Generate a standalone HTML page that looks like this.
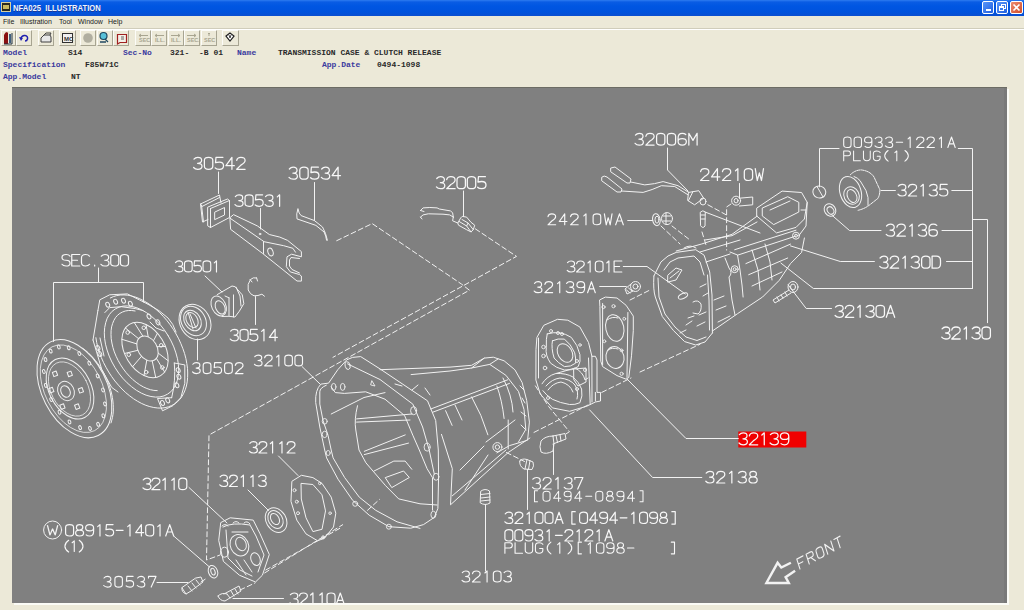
<!DOCTYPE html>
<html><head><meta charset="utf-8">
<style>
html,body{margin:0;padding:0;width:1024px;height:610px;overflow:hidden;background:#ECE9D8;position:relative;font-family:"Liberation Sans",sans-serif;}
.abs{position:absolute;}
#title{left:0;top:0;width:1024px;height:16px;background:linear-gradient(#2e7cf0 0,#0a5ce4 2px,#0056e2 6px,#0053dd 12px,#0b4fd0 16px);}
#title .t{left:13px;top:3px;color:#eef4ff;font-weight:bold;font-size:8.5px;line-height:10px;white-space:nowrap;transform:scaleX(0.9);transform-origin:0 0;text-shadow:0.5px 0.5px 0 #1a3a9a;letter-spacing:0px;}
.wb{top:1px;width:12px;height:13px;border:1px solid #fff;border-radius:2px;box-sizing:border-box;background:linear-gradient(135deg,#5a96f8,#1f5fe0);}
#menu{left:0;top:16px;width:1024px;height:12px;font-size:7px;color:#222;}
#menu span{position:absolute;top:2px;line-height:8px;}
.sep{left:0;top:28px;width:1024px;height:1px;background:#d0cdbb;border-bottom:1px solid #fff;}
.btn{top:30px;height:16px;box-sizing:border-box;border-right:1px solid #a7a491;border-bottom:1px solid #a7a491;border-left:1px solid #fcfcf8;border-top:1px solid #fcfcf8;}
.info{font-family:"Liberation Mono",monospace;font-size:8px;font-weight:bold;line-height:8px;white-space:pre;}
.lb{color:#3b3b9e;}
.vl{color:#2a2a2a;}
#gray{left:12px;top:87px;width:995px;height:516px;background:#808080;box-shadow:2px 2px 0 #fbfbf6;border-top:1px solid #6c6c64;box-sizing:border-box;}
svg.tb{position:absolute;left:0;top:0;}
svg.dr{position:absolute;left:0;top:0;}
</style></head><body>
<div id="title" class="abs">
  <div class="abs" style="left:1px;top:2px;width:10px;height:10px;background:#2a2a20;border:1px solid #d8d0a0;box-sizing:border-box;"><div class="abs" style="left:1px;top:2px;width:6px;height:4px;background:#c8b860"></div></div>
  <div class="abs t">NFA025&nbsp; ILLUSTRATION</div>
  <div class="abs wb" style="left:982px;"><div class="abs" style="left:3px;top:7px;width:5px;height:2px;background:#fff"></div></div>
  <div class="abs wb" style="left:996px;"><div class="abs" style="left:4px;top:2px;width:5px;height:5px;border:1px solid #fff;box-sizing:border-box"></div><div class="abs" style="left:2px;top:4px;width:5px;height:5px;border:1px solid #fff;border-top-width:2px;box-sizing:border-box;background:#3a7cf0"></div></div>
  <div class="abs wb" style="left:1010px;width:13px;background:linear-gradient(135deg,#ec8c72,#d24e28);"><svg class="tb" width="11" height="11"><path d="M2.5 2.5L8.5 8.5M8.5 2.5L2.5 8.5" stroke="#fff" stroke-width="1.6"/></svg></div>
</div>
<div id="menu" class="abs">
  <span style="left:3px">File</span><span style="left:20px">Illustration</span><span style="left:59px">Tool</span><span style="left:78px">Window</span><span style="left:108px">Help</span>
</div>
<div class="abs sep"></div>
<!-- toolbar -->
<div class="abs btn" style="left:1px;width:15px"></div>
<div class="abs btn" style="left:16px;width:16px"></div>
<div class="abs btn" style="left:38px;width:16px"></div>
<div class="abs btn" style="left:59px;width:17px"></div>
<div class="abs btn" style="left:80px;width:16px"></div>
<div class="abs btn" style="left:97px;width:16px"></div>
<div class="abs btn" style="left:113px;width:16px"></div>
<div class="abs btn" style="left:135px;width:16px"></div>
<div class="abs btn" style="left:151px;width:16px"></div>
<div class="abs btn" style="left:168px;width:16px"></div>
<div class="abs btn" style="left:184px;width:16px"></div>
<div class="abs btn" style="left:201px;width:16px"></div>
<div class="abs btn" style="left:222px;width:17px"></div>
<svg class="tb" width="260" height="50">
 <!-- door -->
 <path d="M4 44 L4 35 Q5 32 7 32 L8 33 L8 44 Z" fill="#8a1010"/>
 <rect x="9" y="34" width="2" height="9" fill="#406080"/>
 <path d="M12 33 L12 44 L4 44" stroke="#203040" fill="none" stroke-width="1"/>
 <!-- undo -->
 <path d="M20.5 39 Q22 35 25 35.5 Q28 36 27.5 39 Q27 41 25 41" stroke="#2020b0" fill="none" stroke-width="1.5"/>
 <path d="M19 37 L21 41 L23 38 Z" fill="#2020b0"/>
 <!-- printer -->
 <path d="M41 42 L41 38 L44 35 L50 35 L51 37 L51 42 Z" fill="#e8e8e8" stroke="#404040" stroke-width="1"/>
 <path d="M44 35 L46 33 L51 33 L50 35" fill="none" stroke="#404040"/>
 <!-- MC -->
 <rect x="62.5" y="33.5" width="10" height="9" fill="#f0f0f0" stroke="#303030"/>
 <text x="64" y="40.5" font-family="Liberation Sans" font-size="6" font-weight="bold" fill="#303030">MC</text>
 <!-- gray circle -->
 <circle cx="88" cy="38" r="4.8" fill="#b0aea0"/>
 <!-- search -->
 <circle cx="103.5" cy="36" r="3.5" fill="#58c0d8" stroke="#204860" stroke-width="1.2"/>
 <path d="M100 42 L106 42 M105 39 L108 42" stroke="#204860" stroke-width="1.3"/>
 <!-- red book -->
 <path d="M117.5 34.5 L126.5 34.5 L126.5 42.5 L120 42.5 L117.5 44 Z" fill="#f4f0e8" stroke="#a02020" stroke-width="1.2"/>
 <path d="M121 37 L124 37 M121 39 L124 39" stroke="#404040" stroke-width="0.8"/>
 <!-- disabled nav -->
 <g stroke="#a8a590" fill="none" stroke-width="1">
  <path d="M139 35.5 L148 35.5 M139 35.5 L141 34 M139 35.5 L141 37"/>
  <path d="M155 35.5 L164 35.5 M155 35.5 L157 34 M155 35.5 L157 37"/>
  <path d="M171 35.5 L180 35.5 M180 35.5 L178 34 M180 35.5 L178 37"/>
  <path d="M187 35.5 L196 35.5 M196 35.5 L194 34 M196 35.5 L194 37"/>
  <path d="M209 33 L209 36 M208 34 L209 33 L210 34"/>
 </g>
 <g font-family="Liberation Sans" font-size="5.5" fill="#a8a590" font-weight="bold">
  <text x="139" y="42">SEC</text><text x="155" y="42">ILL.</text><text x="171" y="42">ILL.</text><text x="187" y="42">SEC.</text><text x="204" y="42">SEC</text>
 </g>
 <!-- diamond -->
 <path d="M226 36 L230 33 L234 36 L230 41 Z" fill="#fff" stroke="#202020" stroke-width="1.2"/>
 <path d="M229 35 L230 38 L231 35" stroke="#202020" fill="none" stroke-width="0.8"/>
</svg>
<!-- info -->
<div class="abs info lb" style="left:3px;top:49px">Model</div>
<div class="abs info vl" style="left:68px;top:49px">S14</div>
<div class="abs info lb" style="left:123px;top:49px">Sec-No</div>
<div class="abs info vl" style="left:170px;top:49px">321-</div>
<div class="abs info vl" style="left:199px;top:49px">-B 01</div>
<div class="abs info lb" style="left:237px;top:49px">Name</div>
<div class="abs info vl" style="left:278px;top:49px">TRANSMISSION CASE &amp; CLUTCH RELEASE</div>
<div class="abs info lb" style="left:3px;top:61px">Specification</div>
<div class="abs info vl" style="left:85px;top:61px">F85W71C</div>
<div class="abs info lb" style="left:322px;top:61px">App.Date</div>
<div class="abs info vl" style="left:377px;top:61px">0494-1098</div>
<div class="abs info lb" style="left:3px;top:73px">App.Model</div>
<div class="abs info vl" style="left:71px;top:73px">NT</div>
<div id="gray" class="abs"><div class="abs" style="right:0;top:0;width:3px;height:100%;background:#797979"></div></div>
<svg class="dr" width="1024" height="610" viewBox="0 0 1024 610">
<defs><clipPath id="gc"><rect x="12" y="87" width="995" height="516"/></clipPath></defs>
<g clip-path="url(#gc)">
<g fill="none" stroke="#f2f2f2" stroke-width="1" stroke-linejoin="round" stroke-linecap="round">
<!-- d00_labels.svg -->
<rect x="738.3" y="431.5" width="68" height="16" fill="#f00000" stroke="none"/>
<g fill="none" stroke="#f8f8f8" stroke-width="1.05" vector-effect="non-scaling-stroke" stroke-linecap="round" stroke-linejoin="round">
<path d="M0.3 1.5 Q1.5 0 3.5 0 Q6.7 0 6.7 2.5 Q6.7 5 3.3 5 Q7 5 7 7.5 Q7 10 3.5 10 Q1.2 10 0 8.5" transform="translate(193.60 157.30) scale(1.200 1.200)"/>
<path d="M0 2.5 Q0 0 3.5 0 Q7 0 7 2.5 V7.5 Q7 10 3.5 10 Q0 10 0 7.5 Z" transform="translate(204.38 157.30) scale(1.200 1.200)"/>
<path d="M6.5 0 H0.7 L0.3 4.5 Q1.5 4 3.5 4 Q7 4 7 7 Q7 10 3.5 10 Q1 10 0 8.8" transform="translate(215.15 157.30) scale(1.200 1.200)"/>
<path d="M5 10 V0 L0 7 H7" transform="translate(225.93 157.30) scale(1.200 1.200)"/>
<path d="M0 2.5 Q0.5 0 3.5 0 Q7 0 7 2.7 Q7 4.5 3.5 6.5 L0 10 H7" transform="translate(236.70 157.30) scale(1.200 1.200)"/>
<path d="M0.3 1.5 Q1.5 0 3.5 0 Q6.7 0 6.7 2.5 Q6.7 5 3.3 5 Q7 5 7 7.5 Q7 10 3.5 10 Q1.2 10 0 8.5" transform="translate(235.00 194.80) scale(1.150 1.150)"/>
<path d="M0 2.5 Q0 0 3.5 0 Q7 0 7 2.5 V7.5 Q7 10 3.5 10 Q0 10 0 7.5 Z" transform="translate(245.06 194.80) scale(1.150 1.150)"/>
<path d="M6.5 0 H0.7 L0.3 4.5 Q1.5 4 3.5 4 Q7 4 7 7 Q7 10 3.5 10 Q1 10 0 8.8" transform="translate(255.12 194.80) scale(1.150 1.150)"/>
<path d="M0.3 1.5 Q1.5 0 3.5 0 Q6.7 0 6.7 2.5 Q6.7 5 3.3 5 Q7 5 7 7.5 Q7 10 3.5 10 Q1.2 10 0 8.5" transform="translate(265.19 194.80) scale(1.150 1.150)"/>
<path d="M1.8 1.8 L3.8 0 V10" transform="translate(275.25 194.80) scale(1.150 1.150)"/>
<path d="M0.3 1.5 Q1.5 0 3.5 0 Q6.7 0 6.7 2.5 Q6.7 5 3.3 5 Q7 5 7 7.5 Q7 10 3.5 10 Q1.2 10 0 8.5" transform="translate(289.00 167.20) scale(1.200 1.200)"/>
<path d="M0 2.5 Q0 0 3.5 0 Q7 0 7 2.5 V7.5 Q7 10 3.5 10 Q0 10 0 7.5 Z" transform="translate(299.77 167.20) scale(1.200 1.200)"/>
<path d="M6.5 0 H0.7 L0.3 4.5 Q1.5 4 3.5 4 Q7 4 7 7 Q7 10 3.5 10 Q1 10 0 8.8" transform="translate(310.55 167.20) scale(1.200 1.200)"/>
<path d="M0.3 1.5 Q1.5 0 3.5 0 Q6.7 0 6.7 2.5 Q6.7 5 3.3 5 Q7 5 7 7.5 Q7 10 3.5 10 Q1.2 10 0 8.5" transform="translate(321.32 167.20) scale(1.200 1.200)"/>
<path d="M5 10 V0 L0 7 H7" transform="translate(332.10 167.20) scale(1.200 1.200)"/>
<path d="M0.3 1.5 Q1.5 0 3.5 0 Q6.7 0 6.7 2.5 Q6.7 5 3.3 5 Q7 5 7 7.5 Q7 10 3.5 10 Q1.2 10 0 8.5" transform="translate(436.40 176.70) scale(1.200 1.200)"/>
<path d="M0 2.5 Q0.5 0 3.5 0 Q7 0 7 2.7 Q7 4.5 3.5 6.5 L0 10 H7" transform="translate(446.70 176.70) scale(1.200 1.200)"/>
<path d="M0 2.5 Q0 0 3.5 0 Q7 0 7 2.5 V7.5 Q7 10 3.5 10 Q0 10 0 7.5 Z" transform="translate(457.00 176.70) scale(1.200 1.200)"/>
<path d="M0 2.5 Q0 0 3.5 0 Q7 0 7 2.5 V7.5 Q7 10 3.5 10 Q0 10 0 7.5 Z" transform="translate(467.30 176.70) scale(1.200 1.200)"/>
<path d="M6.5 0 H0.7 L0.3 4.5 Q1.5 4 3.5 4 Q7 4 7 7 Q7 10 3.5 10 Q1 10 0 8.8" transform="translate(477.60 176.70) scale(1.200 1.200)"/>
<path d="M7 1.5 Q6 0 3.5 0 Q0 0 0 2.5 Q0 5 3.5 5 Q7 5 7 7.5 Q7 10 3.5 10 Q1 10 0 8.5" transform="translate(62.00 254.50) scale(1.150 1.150)"/>
<path d="M7 0 H0 V10 H7 M0 5 H5" transform="translate(71.74 254.50) scale(1.150 1.150)"/>
<path d="M7 1.5 Q6 0 3.5 0 Q0 0 0 3 V7 Q0 10 3.5 10 Q6 10 7 8.5" transform="translate(81.48 254.50) scale(1.150 1.150)"/>
<path d="M3 9.2 V10" transform="translate(91.22 254.50) scale(1.150 1.150)"/>
<path d="M0.3 1.5 Q1.5 0 3.5 0 Q6.7 0 6.7 2.5 Q6.7 5 3.3 5 Q7 5 7 7.5 Q7 10 3.5 10 Q1.2 10 0 8.5" transform="translate(100.97 254.50) scale(1.150 1.150)"/>
<path d="M0 2.5 Q0 0 3.5 0 Q7 0 7 2.5 V7.5 Q7 10 3.5 10 Q0 10 0 7.5 Z" transform="translate(110.71 254.50) scale(1.150 1.150)"/>
<path d="M0 2.5 Q0 0 3.5 0 Q7 0 7 2.5 V7.5 Q7 10 3.5 10 Q0 10 0 7.5 Z" transform="translate(120.45 254.50) scale(1.150 1.150)"/>
<path d="M0.3 1.5 Q1.5 0 3.5 0 Q6.7 0 6.7 2.5 Q6.7 5 3.3 5 Q7 5 7 7.5 Q7 10 3.5 10 Q1.2 10 0 8.5" transform="translate(175.20 260.90) scale(1.100 1.100)"/>
<path d="M0 2.5 Q0 0 3.5 0 Q7 0 7 2.5 V7.5 Q7 10 3.5 10 Q0 10 0 7.5 Z" transform="translate(184.47 260.90) scale(1.100 1.100)"/>
<path d="M6.5 0 H0.7 L0.3 4.5 Q1.5 4 3.5 4 Q7 4 7 7 Q7 10 3.5 10 Q1 10 0 8.8" transform="translate(193.75 260.90) scale(1.100 1.100)"/>
<path d="M0 2.5 Q0 0 3.5 0 Q7 0 7 2.5 V7.5 Q7 10 3.5 10 Q0 10 0 7.5 Z" transform="translate(203.03 260.90) scale(1.100 1.100)"/>
<path d="M1.8 1.8 L3.8 0 V10" transform="translate(212.30 260.90) scale(1.100 1.100)"/>
<path d="M0.3 1.5 Q1.5 0 3.5 0 Q6.7 0 6.7 2.5 Q6.7 5 3.3 5 Q7 5 7 7.5 Q7 10 3.5 10 Q1.2 10 0 8.5" transform="translate(230.30 329.30) scale(1.150 1.150)"/>
<path d="M0 2.5 Q0 0 3.5 0 Q7 0 7 2.5 V7.5 Q7 10 3.5 10 Q0 10 0 7.5 Z" transform="translate(240.06 329.30) scale(1.150 1.150)"/>
<path d="M6.5 0 H0.7 L0.3 4.5 Q1.5 4 3.5 4 Q7 4 7 7 Q7 10 3.5 10 Q1 10 0 8.8" transform="translate(249.82 329.30) scale(1.150 1.150)"/>
<path d="M1.8 1.8 L3.8 0 V10" transform="translate(259.59 329.30) scale(1.150 1.150)"/>
<path d="M5 10 V0 L0 7 H7" transform="translate(269.35 329.30) scale(1.150 1.150)"/>
<path d="M0.3 1.5 Q1.5 0 3.5 0 Q6.7 0 6.7 2.5 Q6.7 5 3.3 5 Q7 5 7 7.5 Q7 10 3.5 10 Q1.2 10 0 8.5" transform="translate(192.50 362.60) scale(1.100 1.100)"/>
<path d="M0 2.5 Q0 0 3.5 0 Q7 0 7 2.5 V7.5 Q7 10 3.5 10 Q0 10 0 7.5 Z" transform="translate(203.20 362.60) scale(1.100 1.100)"/>
<path d="M6.5 0 H0.7 L0.3 4.5 Q1.5 4 3.5 4 Q7 4 7 7 Q7 10 3.5 10 Q1 10 0 8.8" transform="translate(213.90 362.60) scale(1.100 1.100)"/>
<path d="M0 2.5 Q0 0 3.5 0 Q7 0 7 2.5 V7.5 Q7 10 3.5 10 Q0 10 0 7.5 Z" transform="translate(224.60 362.60) scale(1.100 1.100)"/>
<path d="M0 2.5 Q0.5 0 3.5 0 Q7 0 7 2.7 Q7 4.5 3.5 6.5 L0 10 H7" transform="translate(235.30 362.60) scale(1.100 1.100)"/>
<path d="M0.3 1.5 Q1.5 0 3.5 0 Q6.7 0 6.7 2.5 Q6.7 5 3.3 5 Q7 5 7 7.5 Q7 10 3.5 10 Q1.2 10 0 8.5" transform="translate(254.50 355.10) scale(1.080 1.080)"/>
<path d="M0 2.5 Q0.5 0 3.5 0 Q7 0 7 2.7 Q7 4.5 3.5 6.5 L0 10 H7" transform="translate(264.61 355.10) scale(1.080 1.080)"/>
<path d="M1.8 1.8 L3.8 0 V10" transform="translate(274.72 355.10) scale(1.080 1.080)"/>
<path d="M0 2.5 Q0 0 3.5 0 Q7 0 7 2.5 V7.5 Q7 10 3.5 10 Q0 10 0 7.5 Z" transform="translate(284.83 355.10) scale(1.080 1.080)"/>
<path d="M0 2.5 Q0 0 3.5 0 Q7 0 7 2.5 V7.5 Q7 10 3.5 10 Q0 10 0 7.5 Z" transform="translate(294.94 355.10) scale(1.080 1.080)"/>
<path d="M0.3 1.5 Q1.5 0 3.5 0 Q6.7 0 6.7 2.5 Q6.7 5 3.3 5 Q7 5 7 7.5 Q7 10 3.5 10 Q1.2 10 0 8.5" transform="translate(249.50 441.70) scale(1.130 1.130)"/>
<path d="M0 2.5 Q0.5 0 3.5 0 Q7 0 7 2.7 Q7 4.5 3.5 6.5 L0 10 H7" transform="translate(258.90 441.70) scale(1.130 1.130)"/>
<path d="M1.8 1.8 L3.8 0 V10" transform="translate(268.30 441.70) scale(1.130 1.130)"/>
<path d="M1.8 1.8 L3.8 0 V10" transform="translate(277.69 441.70) scale(1.130 1.130)"/>
<path d="M0 2.5 Q0.5 0 3.5 0 Q7 0 7 2.7 Q7 4.5 3.5 6.5 L0 10 H7" transform="translate(287.09 441.70) scale(1.130 1.130)"/>
<path d="M0.3 1.5 Q1.5 0 3.5 0 Q6.7 0 6.7 2.5 Q6.7 5 3.3 5 Q7 5 7 7.5 Q7 10 3.5 10 Q1.2 10 0 8.5" transform="translate(219.80 475.20) scale(1.130 1.130)"/>
<path d="M0 2.5 Q0.5 0 3.5 0 Q7 0 7 2.7 Q7 4.5 3.5 6.5 L0 10 H7" transform="translate(229.45 475.20) scale(1.130 1.130)"/>
<path d="M1.8 1.8 L3.8 0 V10" transform="translate(239.09 475.20) scale(1.130 1.130)"/>
<path d="M1.8 1.8 L3.8 0 V10" transform="translate(248.74 475.20) scale(1.130 1.130)"/>
<path d="M0.3 1.5 Q1.5 0 3.5 0 Q6.7 0 6.7 2.5 Q6.7 5 3.3 5 Q7 5 7 7.5 Q7 10 3.5 10 Q1.2 10 0 8.5" transform="translate(258.39 475.20) scale(1.130 1.130)"/>
<path d="M0.3 1.5 Q1.5 0 3.5 0 Q6.7 0 6.7 2.5 Q6.7 5 3.3 5 Q7 5 7 7.5 Q7 10 3.5 10 Q1.2 10 0 8.5" transform="translate(142.90 478.20) scale(1.150 1.150)"/>
<path d="M0 2.5 Q0.5 0 3.5 0 Q7 0 7 2.7 Q7 4.5 3.5 6.5 L0 10 H7" transform="translate(151.86 478.20) scale(1.150 1.150)"/>
<path d="M1.8 1.8 L3.8 0 V10" transform="translate(160.83 478.20) scale(1.150 1.150)"/>
<path d="M1.8 1.8 L3.8 0 V10" transform="translate(169.79 478.20) scale(1.150 1.150)"/>
<path d="M0 2.5 Q0 0 3.5 0 Q7 0 7 2.5 V7.5 Q7 10 3.5 10 Q0 10 0 7.5 Z" transform="translate(178.75 478.20) scale(1.150 1.150)"/>
<path d="M0 2.5 Q0 0 3.5 0 Q7 0 7 2.5 V7.5 Q7 10 3.5 10 Q0 10 0 7.5 Z" transform="translate(65.60 524.60) scale(1.140 1.140)"/>
<path d="M3.5 4.8 Q0.7 4.8 0.7 2.4 Q0.7 0 3.5 0 Q6.3 0 6.3 2.4 Q6.3 4.8 3.5 4.8 Q0 4.8 0 7.4 Q0 10 3.5 10 Q7 10 7 7.4 Q7 4.8 3.5 4.8 Z" transform="translate(75.61 524.60) scale(1.140 1.140)"/>
<path d="M0.5 9 Q1.5 10 3.5 10 Q7 10 7 6 V3 Q7 0 3.5 0 Q0 0 0 3 Q0 5.5 3.5 5.5 Q7 5.5 7 3" transform="translate(85.62 524.60) scale(1.140 1.140)"/>
<path d="M1.8 1.8 L3.8 0 V10" transform="translate(95.64 524.60) scale(1.140 1.140)"/>
<path d="M6.5 0 H0.7 L0.3 4.5 Q1.5 4 3.5 4 Q7 4 7 7 Q7 10 3.5 10 Q1 10 0 8.8" transform="translate(105.65 524.60) scale(1.140 1.140)"/>
<path d="M0.5 5 H6.5" transform="translate(115.66 524.60) scale(1.140 1.140)"/>
<path d="M1.8 1.8 L3.8 0 V10" transform="translate(125.67 524.60) scale(1.140 1.140)"/>
<path d="M5 10 V0 L0 7 H7" transform="translate(135.68 524.60) scale(1.140 1.140)"/>
<path d="M0 2.5 Q0 0 3.5 0 Q7 0 7 2.5 V7.5 Q7 10 3.5 10 Q0 10 0 7.5 Z" transform="translate(145.70 524.60) scale(1.140 1.140)"/>
<path d="M1.8 1.8 L3.8 0 V10" transform="translate(155.71 524.60) scale(1.140 1.140)"/>
<path d="M0 10 L3.5 0 L7 10 M1.2 6.5 H5.8" transform="translate(165.72 524.60) scale(1.140 1.140)"/>
<path d="M5 -0.5 Q1.5 2 1.5 5 Q1.5 8 5 10.5" transform="translate(63.30 540.80) scale(1.070 1.070)"/>
<path d="M1.8 1.8 L3.8 0 V10" transform="translate(70.20 540.80) scale(1.070 1.070)"/>
<path d="M2 -0.5 Q5.5 2 5.5 5 Q5.5 8 2 10.5" transform="translate(77.11 540.80) scale(1.070 1.070)"/>
<path d="M0.3 1.5 Q1.5 0 3.5 0 Q6.7 0 6.7 2.5 Q6.7 5 3.3 5 Q7 5 7 7.5 Q7 10 3.5 10 Q1.2 10 0 8.5" transform="translate(103.70 576.40) scale(1.070 1.070)"/>
<path d="M0 2.5 Q0 0 3.5 0 Q7 0 7 2.5 V7.5 Q7 10 3.5 10 Q0 10 0 7.5 Z" transform="translate(114.90 576.40) scale(1.070 1.070)"/>
<path d="M6.5 0 H0.7 L0.3 4.5 Q1.5 4 3.5 4 Q7 4 7 7 Q7 10 3.5 10 Q1 10 0 8.8" transform="translate(126.11 576.40) scale(1.070 1.070)"/>
<path d="M0.3 1.5 Q1.5 0 3.5 0 Q6.7 0 6.7 2.5 Q6.7 5 3.3 5 Q7 5 7 7.5 Q7 10 3.5 10 Q1.2 10 0 8.5" transform="translate(137.31 576.40) scale(1.070 1.070)"/>
<path d="M0 1.5 V0 H7 L2.5 10" transform="translate(148.51 576.40) scale(1.070 1.070)"/>
<path d="M0.3 1.5 Q1.5 0 3.5 0 Q6.7 0 6.7 2.5 Q6.7 5 3.3 5 Q7 5 7 7.5 Q7 10 3.5 10 Q1.2 10 0 8.5" transform="translate(290.10 593.00) scale(1.150 1.150)"/>
<path d="M0 2.5 Q0.5 0 3.5 0 Q7 0 7 2.7 Q7 4.5 3.5 6.5 L0 10 H7" transform="translate(299.33 593.00) scale(1.150 1.150)"/>
<path d="M1.8 1.8 L3.8 0 V10" transform="translate(308.56 593.00) scale(1.150 1.150)"/>
<path d="M1.8 1.8 L3.8 0 V10" transform="translate(317.79 593.00) scale(1.150 1.150)"/>
<path d="M0 2.5 Q0 0 3.5 0 Q7 0 7 2.5 V7.5 Q7 10 3.5 10 Q0 10 0 7.5 Z" transform="translate(327.02 593.00) scale(1.150 1.150)"/>
<path d="M0 10 L3.5 0 L7 10 M1.2 6.5 H5.8" transform="translate(336.25 593.00) scale(1.150 1.150)"/>
<path d="M0.3 1.5 Q1.5 0 3.5 0 Q6.7 0 6.7 2.5 Q6.7 5 3.3 5 Q7 5 7 7.5 Q7 10 3.5 10 Q1.2 10 0 8.5" transform="translate(462.00 571.00) scale(1.100 1.100)"/>
<path d="M0 2.5 Q0.5 0 3.5 0 Q7 0 7 2.7 Q7 4.5 3.5 6.5 L0 10 H7" transform="translate(472.45 571.00) scale(1.100 1.100)"/>
<path d="M1.8 1.8 L3.8 0 V10" transform="translate(482.90 571.00) scale(1.100 1.100)"/>
<path d="M0 2.5 Q0 0 3.5 0 Q7 0 7 2.5 V7.5 Q7 10 3.5 10 Q0 10 0 7.5 Z" transform="translate(493.35 571.00) scale(1.100 1.100)"/>
<path d="M0.3 1.5 Q1.5 0 3.5 0 Q6.7 0 6.7 2.5 Q6.7 5 3.3 5 Q7 5 7 7.5 Q7 10 3.5 10 Q1.2 10 0 8.5" transform="translate(503.80 571.00) scale(1.100 1.100)"/>
<path d="M0.3 1.5 Q1.5 0 3.5 0 Q6.7 0 6.7 2.5 Q6.7 5 3.3 5 Q7 5 7 7.5 Q7 10 3.5 10 Q1.2 10 0 8.5" transform="translate(532.50 477.50) scale(1.150 1.150)"/>
<path d="M0 2.5 Q0.5 0 3.5 0 Q7 0 7 2.7 Q7 4.5 3.5 6.5 L0 10 H7" transform="translate(543.09 477.50) scale(1.150 1.150)"/>
<path d="M1.8 1.8 L3.8 0 V10" transform="translate(553.67 477.50) scale(1.150 1.150)"/>
<path d="M0.3 1.5 Q1.5 0 3.5 0 Q6.7 0 6.7 2.5 Q6.7 5 3.3 5 Q7 5 7 7.5 Q7 10 3.5 10 Q1.2 10 0 8.5" transform="translate(564.26 477.50) scale(1.150 1.150)"/>
<path d="M0 1.5 V0 H7 L2.5 10" transform="translate(574.85 477.50) scale(1.150 1.150)"/>
<path d="M5 -0.5 H2 V10.5 H5" transform="translate(532.50 491.20) scale(1.000 1.000)"/>
<path d="M0 2.5 Q0 0 3.5 0 Q7 0 7 2.5 V7.5 Q7 10 3.5 10 Q0 10 0 7.5 Z" transform="translate(543.05 491.20) scale(1.000 1.000)"/>
<path d="M5 10 V0 L0 7 H7" transform="translate(553.60 491.20) scale(1.000 1.000)"/>
<path d="M0.5 9 Q1.5 10 3.5 10 Q7 10 7 6 V3 Q7 0 3.5 0 Q0 0 0 3 Q0 5.5 3.5 5.5 Q7 5.5 7 3" transform="translate(564.15 491.20) scale(1.000 1.000)"/>
<path d="M5 10 V0 L0 7 H7" transform="translate(574.70 491.20) scale(1.000 1.000)"/>
<path d="M0.5 5 H6.5" transform="translate(585.25 491.20) scale(1.000 1.000)"/>
<path d="M0 2.5 Q0 0 3.5 0 Q7 0 7 2.5 V7.5 Q7 10 3.5 10 Q0 10 0 7.5 Z" transform="translate(595.80 491.20) scale(1.000 1.000)"/>
<path d="M3.5 4.8 Q0.7 4.8 0.7 2.4 Q0.7 0 3.5 0 Q6.3 0 6.3 2.4 Q6.3 4.8 3.5 4.8 Q0 4.8 0 7.4 Q0 10 3.5 10 Q7 10 7 7.4 Q7 4.8 3.5 4.8 Z" transform="translate(606.35 491.20) scale(1.000 1.000)"/>
<path d="M0.5 9 Q1.5 10 3.5 10 Q7 10 7 6 V3 Q7 0 3.5 0 Q0 0 0 3 Q0 5.5 3.5 5.5 Q7 5.5 7 3" transform="translate(616.90 491.20) scale(1.000 1.000)"/>
<path d="M5 10 V0 L0 7 H7" transform="translate(627.45 491.20) scale(1.000 1.000)"/>
<path d="M2 -0.5 H5 V10.5 H2" transform="translate(638.00 491.20) scale(1.000 1.000)"/>
<path d="M0.3 1.5 Q1.5 0 3.5 0 Q6.7 0 6.7 2.5 Q6.7 5 3.3 5 Q7 5 7 7.5 Q7 10 3.5 10 Q1.2 10 0 8.5" transform="translate(504.90 512.20) scale(1.130 1.130)"/>
<path d="M0 2.5 Q0.5 0 3.5 0 Q7 0 7 2.7 Q7 4.5 3.5 6.5 L0 10 H7" transform="translate(514.94 512.20) scale(1.130 1.130)"/>
<path d="M1.8 1.8 L3.8 0 V10" transform="translate(524.98 512.20) scale(1.130 1.130)"/>
<path d="M0 2.5 Q0 0 3.5 0 Q7 0 7 2.5 V7.5 Q7 10 3.5 10 Q0 10 0 7.5 Z" transform="translate(535.01 512.20) scale(1.130 1.130)"/>
<path d="M0 2.5 Q0 0 3.5 0 Q7 0 7 2.5 V7.5 Q7 10 3.5 10 Q0 10 0 7.5 Z" transform="translate(545.05 512.20) scale(1.130 1.130)"/>
<path d="M0 10 L3.5 0 L7 10 M1.2 6.5 H5.8" transform="translate(555.09 512.20) scale(1.130 1.130)"/>
<path d="M5 -0.5 H2 V10.5 H5" transform="translate(569.60 512.20) scale(1.130 1.130)"/>
<path d="M0 2.5 Q0 0 3.5 0 Q7 0 7 2.5 V7.5 Q7 10 3.5 10 Q0 10 0 7.5 Z" transform="translate(579.60 512.20) scale(1.130 1.130)"/>
<path d="M5 10 V0 L0 7 H7" transform="translate(589.60 512.20) scale(1.130 1.130)"/>
<path d="M0.5 9 Q1.5 10 3.5 10 Q7 10 7 6 V3 Q7 0 3.5 0 Q0 0 0 3 Q0 5.5 3.5 5.5 Q7 5.5 7 3" transform="translate(599.60 512.20) scale(1.130 1.130)"/>
<path d="M5 10 V0 L0 7 H7" transform="translate(609.60 512.20) scale(1.130 1.130)"/>
<path d="M0.5 5 H6.5" transform="translate(619.60 512.20) scale(1.130 1.130)"/>
<path d="M1.8 1.8 L3.8 0 V10" transform="translate(629.59 512.20) scale(1.130 1.130)"/>
<path d="M0 2.5 Q0 0 3.5 0 Q7 0 7 2.5 V7.5 Q7 10 3.5 10 Q0 10 0 7.5 Z" transform="translate(639.59 512.20) scale(1.130 1.130)"/>
<path d="M0.5 9 Q1.5 10 3.5 10 Q7 10 7 6 V3 Q7 0 3.5 0 Q0 0 0 3 Q0 5.5 3.5 5.5 Q7 5.5 7 3" transform="translate(649.59 512.20) scale(1.130 1.130)"/>
<path d="M3.5 4.8 Q0.7 4.8 0.7 2.4 Q0.7 0 3.5 0 Q6.3 0 6.3 2.4 Q6.3 4.8 3.5 4.8 Q0 4.8 0 7.4 Q0 10 3.5 10 Q7 10 7 7.4 Q7 4.8 3.5 4.8 Z" transform="translate(659.59 512.20) scale(1.130 1.130)"/>
<path d="M2 -0.5 H5 V10.5 H2" transform="translate(669.59 512.20) scale(1.130 1.130)"/>
<path d="M0 2.5 Q0 0 3.5 0 Q7 0 7 2.5 V7.5 Q7 10 3.5 10 Q0 10 0 7.5 Z" transform="translate(504.90 529.70) scale(1.130 1.130)"/>
<path d="M0 2.5 Q0 0 3.5 0 Q7 0 7 2.5 V7.5 Q7 10 3.5 10 Q0 10 0 7.5 Z" transform="translate(514.90 529.70) scale(1.130 1.130)"/>
<path d="M0.5 9 Q1.5 10 3.5 10 Q7 10 7 6 V3 Q7 0 3.5 0 Q0 0 0 3 Q0 5.5 3.5 5.5 Q7 5.5 7 3" transform="translate(524.90 529.70) scale(1.130 1.130)"/>
<path d="M0.3 1.5 Q1.5 0 3.5 0 Q6.7 0 6.7 2.5 Q6.7 5 3.3 5 Q7 5 7 7.5 Q7 10 3.5 10 Q1.2 10 0 8.5" transform="translate(534.90 529.70) scale(1.130 1.130)"/>
<path d="M1.8 1.8 L3.8 0 V10" transform="translate(544.90 529.70) scale(1.130 1.130)"/>
<path d="M0.5 5 H6.5" transform="translate(554.89 529.70) scale(1.130 1.130)"/>
<path d="M0 2.5 Q0.5 0 3.5 0 Q7 0 7 2.7 Q7 4.5 3.5 6.5 L0 10 H7" transform="translate(564.89 529.70) scale(1.130 1.130)"/>
<path d="M1.8 1.8 L3.8 0 V10" transform="translate(574.89 529.70) scale(1.130 1.130)"/>
<path d="M0 2.5 Q0.5 0 3.5 0 Q7 0 7 2.7 Q7 4.5 3.5 6.5 L0 10 H7" transform="translate(584.89 529.70) scale(1.130 1.130)"/>
<path d="M1.8 1.8 L3.8 0 V10" transform="translate(594.89 529.70) scale(1.130 1.130)"/>
<path d="M0 10 L3.5 0 L7 10 M1.2 6.5 H5.8" transform="translate(604.89 529.70) scale(1.130 1.130)"/>
<path d="M0 10 V0 H4.5 Q7 0 7 2.5 Q7 5 4.5 5 H0" transform="translate(504.90 542.70) scale(1.060 1.060)"/>
<path d="M0 0 V10 H7" transform="translate(515.07 542.70) scale(1.060 1.060)"/>
<path d="M0 0 V7 Q0 10 3.5 10 Q7 10 7 7 V0" transform="translate(525.25 542.70) scale(1.060 1.060)"/>
<path d="M7 1.5 Q6 0 3.5 0 Q0 0 0 3 V7 Q0 10 3.5 10 Q7 10 7 7 V5.5 H4" transform="translate(535.42 542.70) scale(1.060 1.060)"/>
<path d="M5 -0.5 Q1.5 2 1.5 5 Q1.5 8 5 10.5" transform="translate(545.59 542.70) scale(1.060 1.060)"/>
<path d="M1.8 1.8 L3.8 0 V10" transform="translate(555.77 542.70) scale(1.060 1.060)"/>
<path d="M2 -0.5 Q5.5 2 5.5 5 Q5.5 8 2 10.5" transform="translate(565.94 542.70) scale(1.060 1.060)"/>
<path d="M5 -0.5 H2 V10.5 H5" transform="translate(576.11 542.70) scale(1.060 1.060)"/>
<path d="M1.8 1.8 L3.8 0 V10" transform="translate(586.29 542.70) scale(1.060 1.060)"/>
<path d="M0 2.5 Q0 0 3.5 0 Q7 0 7 2.5 V7.5 Q7 10 3.5 10 Q0 10 0 7.5 Z" transform="translate(596.46 542.70) scale(1.060 1.060)"/>
<path d="M0.5 9 Q1.5 10 3.5 10 Q7 10 7 6 V3 Q7 0 3.5 0 Q0 0 0 3 Q0 5.5 3.5 5.5 Q7 5.5 7 3" transform="translate(606.63 542.70) scale(1.060 1.060)"/>
<path d="M3.5 4.8 Q0.7 4.8 0.7 2.4 Q0.7 0 3.5 0 Q6.3 0 6.3 2.4 Q6.3 4.8 3.5 4.8 Q0 4.8 0 7.4 Q0 10 3.5 10 Q7 10 7 7.4 Q7 4.8 3.5 4.8 Z" transform="translate(616.81 542.70) scale(1.060 1.060)"/>
<path d="M0.5 5 H6.5" transform="translate(626.98 542.70) scale(1.060 1.060)"/>
<path d="M2 -0.5 H5 V10.5 H2" transform="translate(669.20 542.70) scale(1.060 1.060)"/>
<path d="M0.3 1.5 Q1.5 0 3.5 0 Q6.7 0 6.7 2.5 Q6.7 5 3.3 5 Q7 5 7 7.5 Q7 10 3.5 10 Q1.2 10 0 8.5" transform="translate(705.80 471.30) scale(1.170 1.170)"/>
<path d="M0 2.5 Q0.5 0 3.5 0 Q7 0 7 2.7 Q7 4.5 3.5 6.5 L0 10 H7" transform="translate(716.60 471.30) scale(1.170 1.170)"/>
<path d="M1.8 1.8 L3.8 0 V10" transform="translate(727.40 471.30) scale(1.170 1.170)"/>
<path d="M0.3 1.5 Q1.5 0 3.5 0 Q6.7 0 6.7 2.5 Q6.7 5 3.3 5 Q7 5 7 7.5 Q7 10 3.5 10 Q1.2 10 0 8.5" transform="translate(738.21 471.30) scale(1.170 1.170)"/>
<path d="M3.5 4.8 Q0.7 4.8 0.7 2.4 Q0.7 0 3.5 0 Q6.3 0 6.3 2.4 Q6.3 4.8 3.5 4.8 Q0 4.8 0 7.4 Q0 10 3.5 10 Q7 10 7 7.4 Q7 4.8 3.5 4.8 Z" transform="translate(749.01 471.30) scale(1.170 1.170)"/>
<path d="M0.3 1.5 Q1.5 0 3.5 0 Q6.7 0 6.7 2.5 Q6.7 5 3.3 5 Q7 5 7 7.5 Q7 10 3.5 10 Q1.2 10 0 8.5" transform="translate(739.00 432.80) scale(1.200 1.200)"/>
<path d="M0 2.5 Q0.5 0 3.5 0 Q7 0 7 2.7 Q7 4.5 3.5 6.5 L0 10 H7" transform="translate(749.35 432.80) scale(1.200 1.200)"/>
<path d="M1.8 1.8 L3.8 0 V10" transform="translate(759.70 432.80) scale(1.200 1.200)"/>
<path d="M0.3 1.5 Q1.5 0 3.5 0 Q6.7 0 6.7 2.5 Q6.7 5 3.3 5 Q7 5 7 7.5 Q7 10 3.5 10 Q1.2 10 0 8.5" transform="translate(770.05 432.80) scale(1.200 1.200)"/>
<path d="M0.5 9 Q1.5 10 3.5 10 Q7 10 7 6 V3 Q7 0 3.5 0 Q0 0 0 3 Q0 5.5 3.5 5.5 Q7 5.5 7 3" transform="translate(780.40 432.80) scale(1.200 1.200)"/>
<path d="M0.3 1.5 Q1.5 0 3.5 0 Q6.7 0 6.7 2.5 Q6.7 5 3.3 5 Q7 5 7 7.5 Q7 10 3.5 10 Q1.2 10 0 8.5" transform="translate(635.10 133.30) scale(1.180 1.180)"/>
<path d="M0 2.5 Q0.5 0 3.5 0 Q7 0 7 2.7 Q7 4.5 3.5 6.5 L0 10 H7" transform="translate(645.85 133.30) scale(1.180 1.180)"/>
<path d="M0 2.5 Q0 0 3.5 0 Q7 0 7 2.5 V7.5 Q7 10 3.5 10 Q0 10 0 7.5 Z" transform="translate(656.60 133.30) scale(1.180 1.180)"/>
<path d="M0 2.5 Q0 0 3.5 0 Q7 0 7 2.5 V7.5 Q7 10 3.5 10 Q0 10 0 7.5 Z" transform="translate(667.34 133.30) scale(1.180 1.180)"/>
<path d="M6.5 1 Q5.5 0 3.5 0 Q0 0 0 4 V7 Q0 10 3.5 10 Q7 10 7 7 Q7 4.5 3.5 4.5 Q0 4.5 0 7" transform="translate(678.09 133.30) scale(1.180 1.180)"/>
<path d="M0 10 V0 L3.5 6 L7 0 V10" transform="translate(688.84 133.30) scale(1.180 1.180)"/>
<path d="M0 2.5 Q0.5 0 3.5 0 Q7 0 7 2.7 Q7 4.5 3.5 6.5 L0 10 H7" transform="translate(700.60 168.70) scale(1.180 1.180)"/>
<path d="M5 10 V0 L0 7 H7" transform="translate(711.53 168.70) scale(1.180 1.180)"/>
<path d="M0 2.5 Q0.5 0 3.5 0 Q7 0 7 2.7 Q7 4.5 3.5 6.5 L0 10 H7" transform="translate(722.46 168.70) scale(1.180 1.180)"/>
<path d="M1.8 1.8 L3.8 0 V10" transform="translate(733.38 168.70) scale(1.180 1.180)"/>
<path d="M0 2.5 Q0 0 3.5 0 Q7 0 7 2.5 V7.5 Q7 10 3.5 10 Q0 10 0 7.5 Z" transform="translate(744.31 168.70) scale(1.180 1.180)"/>
<path d="M0 0 L1.7 10 L3.5 3.5 L5.3 10 L7 0" transform="translate(755.24 168.70) scale(1.180 1.180)"/>
<path d="M0 2.5 Q0.5 0 3.5 0 Q7 0 7 2.7 Q7 4.5 3.5 6.5 L0 10 H7" transform="translate(548.00 213.90) scale(1.090 1.090)"/>
<path d="M5 10 V0 L0 7 H7" transform="translate(559.28 213.90) scale(1.090 1.090)"/>
<path d="M0 2.5 Q0.5 0 3.5 0 Q7 0 7 2.7 Q7 4.5 3.5 6.5 L0 10 H7" transform="translate(570.56 213.90) scale(1.090 1.090)"/>
<path d="M1.8 1.8 L3.8 0 V10" transform="translate(581.84 213.90) scale(1.090 1.090)"/>
<path d="M0 2.5 Q0 0 3.5 0 Q7 0 7 2.5 V7.5 Q7 10 3.5 10 Q0 10 0 7.5 Z" transform="translate(593.11 213.90) scale(1.090 1.090)"/>
<path d="M0 0 L1.7 10 L3.5 3.5 L5.3 10 L7 0" transform="translate(604.39 213.90) scale(1.090 1.090)"/>
<path d="M0 10 L3.5 0 L7 10 M1.2 6.5 H5.8" transform="translate(615.67 213.90) scale(1.090 1.090)"/>
<path d="M0.3 1.5 Q1.5 0 3.5 0 Q6.7 0 6.7 2.5 Q6.7 5 3.3 5 Q7 5 7 7.5 Q7 10 3.5 10 Q1.2 10 0 8.5" transform="translate(567.20 261.00) scale(1.100 1.100)"/>
<path d="M0 2.5 Q0.5 0 3.5 0 Q7 0 7 2.7 Q7 4.5 3.5 6.5 L0 10 H7" transform="translate(576.58 261.00) scale(1.100 1.100)"/>
<path d="M1.8 1.8 L3.8 0 V10" transform="translate(585.96 261.00) scale(1.100 1.100)"/>
<path d="M0 2.5 Q0 0 3.5 0 Q7 0 7 2.5 V7.5 Q7 10 3.5 10 Q0 10 0 7.5 Z" transform="translate(595.34 261.00) scale(1.100 1.100)"/>
<path d="M1.8 1.8 L3.8 0 V10" transform="translate(604.72 261.00) scale(1.100 1.100)"/>
<path d="M7 0 H0 V10 H7 M0 5 H5" transform="translate(614.10 261.00) scale(1.100 1.100)"/>
<path d="M0.3 1.5 Q1.5 0 3.5 0 Q6.7 0 6.7 2.5 Q6.7 5 3.3 5 Q7 5 7 7.5 Q7 10 3.5 10 Q1.2 10 0 8.5" transform="translate(534.20 281.70) scale(1.100 1.100)"/>
<path d="M0 2.5 Q0.5 0 3.5 0 Q7 0 7 2.7 Q7 4.5 3.5 6.5 L0 10 H7" transform="translate(544.88 281.70) scale(1.100 1.100)"/>
<path d="M1.8 1.8 L3.8 0 V10" transform="translate(555.56 281.70) scale(1.100 1.100)"/>
<path d="M0.3 1.5 Q1.5 0 3.5 0 Q6.7 0 6.7 2.5 Q6.7 5 3.3 5 Q7 5 7 7.5 Q7 10 3.5 10 Q1.2 10 0 8.5" transform="translate(566.24 281.70) scale(1.100 1.100)"/>
<path d="M0.5 9 Q1.5 10 3.5 10 Q7 10 7 6 V3 Q7 0 3.5 0 Q0 0 0 3 Q0 5.5 3.5 5.5 Q7 5.5 7 3" transform="translate(576.92 281.70) scale(1.100 1.100)"/>
<path d="M0 10 L3.5 0 L7 10 M1.2 6.5 H5.8" transform="translate(587.60 281.70) scale(1.100 1.100)"/>
<path d="M0 2.5 Q0 0 3.5 0 Q7 0 7 2.5 V7.5 Q7 10 3.5 10 Q0 10 0 7.5 Z" transform="translate(843.70 137.00) scale(1.050 1.050)"/>
<path d="M0 2.5 Q0 0 3.5 0 Q7 0 7 2.5 V7.5 Q7 10 3.5 10 Q0 10 0 7.5 Z" transform="translate(854.12 137.00) scale(1.050 1.050)"/>
<path d="M0.5 9 Q1.5 10 3.5 10 Q7 10 7 6 V3 Q7 0 3.5 0 Q0 0 0 3 Q0 5.5 3.5 5.5 Q7 5.5 7 3" transform="translate(864.53 137.00) scale(1.050 1.050)"/>
<path d="M0.3 1.5 Q1.5 0 3.5 0 Q6.7 0 6.7 2.5 Q6.7 5 3.3 5 Q7 5 7 7.5 Q7 10 3.5 10 Q1.2 10 0 8.5" transform="translate(874.95 137.00) scale(1.050 1.050)"/>
<path d="M0.3 1.5 Q1.5 0 3.5 0 Q6.7 0 6.7 2.5 Q6.7 5 3.3 5 Q7 5 7 7.5 Q7 10 3.5 10 Q1.2 10 0 8.5" transform="translate(885.36 137.00) scale(1.050 1.050)"/>
<path d="M0.5 5 H6.5" transform="translate(895.78 137.00) scale(1.050 1.050)"/>
<path d="M1.8 1.8 L3.8 0 V10" transform="translate(906.19 137.00) scale(1.050 1.050)"/>
<path d="M0 2.5 Q0.5 0 3.5 0 Q7 0 7 2.7 Q7 4.5 3.5 6.5 L0 10 H7" transform="translate(916.61 137.00) scale(1.050 1.050)"/>
<path d="M0 2.5 Q0.5 0 3.5 0 Q7 0 7 2.7 Q7 4.5 3.5 6.5 L0 10 H7" transform="translate(927.02 137.00) scale(1.050 1.050)"/>
<path d="M1.8 1.8 L3.8 0 V10" transform="translate(937.44 137.00) scale(1.050 1.050)"/>
<path d="M0 10 L3.5 0 L7 10 M1.2 6.5 H5.8" transform="translate(947.85 137.00) scale(1.050 1.050)"/>
<path d="M0 10 V0 H4.5 Q7 0 7 2.5 Q7 5 4.5 5 H0" transform="translate(843.70 151.00) scale(0.970 0.970)"/>
<path d="M0 0 V10 H7" transform="translate(853.59 151.00) scale(0.970 0.970)"/>
<path d="M0 0 V7 Q0 10 3.5 10 Q7 10 7 7 V0" transform="translate(863.47 151.00) scale(0.970 0.970)"/>
<path d="M7 1.5 Q6 0 3.5 0 Q0 0 0 3 V7 Q0 10 3.5 10 Q7 10 7 7 V5.5 H4" transform="translate(873.36 151.00) scale(0.970 0.970)"/>
<path d="M5 -0.5 Q1.5 2 1.5 5 Q1.5 8 5 10.5" transform="translate(883.24 151.00) scale(0.970 0.970)"/>
<path d="M1.8 1.8 L3.8 0 V10" transform="translate(893.12 151.00) scale(0.970 0.970)"/>
<path d="M2 -0.5 Q5.5 2 5.5 5 Q5.5 8 2 10.5" transform="translate(903.01 151.00) scale(0.970 0.970)"/>
<path d="M0.3 1.5 Q1.5 0 3.5 0 Q6.7 0 6.7 2.5 Q6.7 5 3.3 5 Q7 5 7 7.5 Q7 10 3.5 10 Q1.2 10 0 8.5" transform="translate(898.00 184.30) scale(1.170 1.170)"/>
<path d="M0 2.5 Q0.5 0 3.5 0 Q7 0 7 2.7 Q7 4.5 3.5 6.5 L0 10 H7" transform="translate(908.40 184.30) scale(1.170 1.170)"/>
<path d="M1.8 1.8 L3.8 0 V10" transform="translate(918.80 184.30) scale(1.170 1.170)"/>
<path d="M0.3 1.5 Q1.5 0 3.5 0 Q6.7 0 6.7 2.5 Q6.7 5 3.3 5 Q7 5 7 7.5 Q7 10 3.5 10 Q1.2 10 0 8.5" transform="translate(929.21 184.30) scale(1.170 1.170)"/>
<path d="M6.5 0 H0.7 L0.3 4.5 Q1.5 4 3.5 4 Q7 4 7 7 Q7 10 3.5 10 Q1 10 0 8.8" transform="translate(939.61 184.30) scale(1.170 1.170)"/>
<path d="M0.3 1.5 Q1.5 0 3.5 0 Q6.7 0 6.7 2.5 Q6.7 5 3.3 5 Q7 5 7 7.5 Q7 10 3.5 10 Q1.2 10 0 8.5" transform="translate(886.20 224.20) scale(1.200 1.200)"/>
<path d="M0 2.5 Q0.5 0 3.5 0 Q7 0 7 2.7 Q7 4.5 3.5 6.5 L0 10 H7" transform="translate(896.90 224.20) scale(1.200 1.200)"/>
<path d="M1.8 1.8 L3.8 0 V10" transform="translate(907.60 224.20) scale(1.200 1.200)"/>
<path d="M0.3 1.5 Q1.5 0 3.5 0 Q6.7 0 6.7 2.5 Q6.7 5 3.3 5 Q7 5 7 7.5 Q7 10 3.5 10 Q1.2 10 0 8.5" transform="translate(918.30 224.20) scale(1.200 1.200)"/>
<path d="M6.5 1 Q5.5 0 3.5 0 Q0 0 0 4 V7 Q0 10 3.5 10 Q7 10 7 7 Q7 4.5 3.5 4.5 Q0 4.5 0 7" transform="translate(929.00 224.20) scale(1.200 1.200)"/>
<path d="M0.3 1.5 Q1.5 0 3.5 0 Q6.7 0 6.7 2.5 Q6.7 5 3.3 5 Q7 5 7 7.5 Q7 10 3.5 10 Q1.2 10 0 8.5" transform="translate(879.70 256.20) scale(1.200 1.200)"/>
<path d="M0 2.5 Q0.5 0 3.5 0 Q7 0 7 2.7 Q7 4.5 3.5 6.5 L0 10 H7" transform="translate(890.18 256.20) scale(1.200 1.200)"/>
<path d="M1.8 1.8 L3.8 0 V10" transform="translate(900.66 256.20) scale(1.200 1.200)"/>
<path d="M0.3 1.5 Q1.5 0 3.5 0 Q6.7 0 6.7 2.5 Q6.7 5 3.3 5 Q7 5 7 7.5 Q7 10 3.5 10 Q1.2 10 0 8.5" transform="translate(911.14 256.20) scale(1.200 1.200)"/>
<path d="M0 2.5 Q0 0 3.5 0 Q7 0 7 2.5 V7.5 Q7 10 3.5 10 Q0 10 0 7.5 Z" transform="translate(921.62 256.20) scale(1.200 1.200)"/>
<path d="M0 0 V10 H3.5 Q7 10 7 6.5 V3.5 Q7 0 3.5 0 Z" transform="translate(932.10 256.20) scale(1.200 1.200)"/>
<path d="M0.3 1.5 Q1.5 0 3.5 0 Q6.7 0 6.7 2.5 Q6.7 5 3.3 5 Q7 5 7 7.5 Q7 10 3.5 10 Q1.2 10 0 8.5" transform="translate(835.10 305.30) scale(1.200 1.200)"/>
<path d="M0 2.5 Q0.5 0 3.5 0 Q7 0 7 2.7 Q7 4.5 3.5 6.5 L0 10 H7" transform="translate(845.34 305.30) scale(1.200 1.200)"/>
<path d="M1.8 1.8 L3.8 0 V10" transform="translate(855.58 305.30) scale(1.200 1.200)"/>
<path d="M0.3 1.5 Q1.5 0 3.5 0 Q6.7 0 6.7 2.5 Q6.7 5 3.3 5 Q7 5 7 7.5 Q7 10 3.5 10 Q1.2 10 0 8.5" transform="translate(865.82 305.30) scale(1.200 1.200)"/>
<path d="M0 2.5 Q0 0 3.5 0 Q7 0 7 2.5 V7.5 Q7 10 3.5 10 Q0 10 0 7.5 Z" transform="translate(876.06 305.30) scale(1.200 1.200)"/>
<path d="M0 10 L3.5 0 L7 10 M1.2 6.5 H5.8" transform="translate(886.30 305.30) scale(1.200 1.200)"/>
<path d="M0.3 1.5 Q1.5 0 3.5 0 Q6.7 0 6.7 2.5 Q6.7 5 3.3 5 Q7 5 7 7.5 Q7 10 3.5 10 Q1.2 10 0 8.5" transform="translate(941.70 327.00) scale(1.200 1.200)"/>
<path d="M0 2.5 Q0.5 0 3.5 0 Q7 0 7 2.7 Q7 4.5 3.5 6.5 L0 10 H7" transform="translate(951.77 327.00) scale(1.200 1.200)"/>
<path d="M1.8 1.8 L3.8 0 V10" transform="translate(961.85 327.00) scale(1.200 1.200)"/>
<path d="M0.3 1.5 Q1.5 0 3.5 0 Q6.7 0 6.7 2.5 Q6.7 5 3.3 5 Q7 5 7 7.5 Q7 10 3.5 10 Q1.2 10 0 8.5" transform="translate(971.92 327.00) scale(1.200 1.200)"/>
<path d="M0 2.5 Q0 0 3.5 0 Q7 0 7 2.5 V7.5 Q7 10 3.5 10 Q0 10 0 7.5 Z" transform="translate(982.00 327.00) scale(1.200 1.200)"/>
</g>
<!-- d01_leaders.svg -->
<path d="M218.5 172 V193.5 M314.5 182.5 V220.5 M260.5 208.5 V229 M463.5 191 V216.5"/>
<path d="M98.5 268 V282.5 M53.5 341.5 V282.5 H143.5 V302"/>
<path d="M205 276 L222 292 M255.5 296.5 V324.5 M197.5 339 V360 M302 366.5 L320 384"/>
<path d="M278.5 456 L298 475.5 M248 490 L268.5 510.5 M189 487.5 L227 523 M173.7 536 L209.5 567 M157 582.5 H188 M233 598.5 H283.5"/>
<path d="M485.5 504.5 V571 M553.5 444.5 V474.5 M527.5 469.5 V509.5"/>
<path d="M627 379 L686 438.5 H738.3 M589.6 409.9 L652.6 477.5 H701.8"/>
<path d="M667.5 148 V170 L688 191 M739.5 183.5 V198 M627.7 220.5 H652.8 M623.3 266.5 H647 L685.3 294 M599.7 286.5 H626.3"/>
<path d="M819.5 186.9 V148.5 H839 M958.3 148.5 H972.5 V288.5 M881 190.5 H895.4 M951.8 190.5 H972.5 M832.5 215.7 L849.5 230.5 H881 M942 230.5 H972.5"/>
<path d="M790.5 245.9 L840.3 261.5 H874.4 M946.5 261.5 H972.5 M972.5 219.5 H987.5 V322.7 M780.9 263.1 L813.4 288.5 H972.5 M788.1 284.8 L806.2 308.5 H831.5"/>
<circle cx="52.6" cy="530" r="9"/>
<path stroke-width="0.95" d="M0 0 L1.7 10 L3.5 3.5 L5.3 10 L7 0" transform="translate(47.5 525.5) scale(1.45 0.95)"/>

<!-- d02_topleft.svg -->
<!-- 30542 pad -->
<path d="M200.5 204 L219.5 195 L221 203 M200.5 204 L202.5 222 L208 219.5 M202 206.5 L219.5 197.5 M201.5 205 L203.5 222"/>
<path d="M208 207 L227.5 199 L229.5 200.5 L229.5 217.5 L210.5 227.5 L208 226 Z M210.5 208.5 L229.5 200.5 M210.5 208.5 V227.5"/>
<path d="M215 212 L224.5 207.5 V215 L215 219.5 Z"/>
<!-- 30531 fork -->
<path d="M233.9 214.8 L257.5 226 L269.3 234.5 L279.8 237.1 L287.6 240.4 L301.4 251.6 L301.4 256.8 L291.6 254.2 L287 256.8 L286.3 266.6 L290.3 271.9 L299.4 274.5 L301.4 276 L301.4 281.1 L297 281 L262.7 253.5 L230.6 229.3 L229.9 218.1 Z"/>
<path d="M229.9 218.1 L261.4 239.8 L264 241.7 L283.7 245.7 L292.9 248.3 L295.5 252.2 M263.5 241.7 V253.5"/>
<path d="M299.5 258.5 L291 257.5 L289.5 260 L289.5 266 L292 269.5 L299.5 273"/>
<ellipse cx="270.5" cy="252" rx="2.5" ry="4" transform="rotate(-20 270.5 252)"/>
<circle cx="260" cy="234" r="0.8"/>
<!-- 30534 spring -->
<path d="M297.9 209 Q299 214 301.1 215.6 L314.3 220.5 L322.5 227 Q326 233 327.4 240.2"/>
<path d="M297.9 209 Q296 214 297 218.9 L315.9 225.4 L324.1 232 Q326 236 326.6 240.2"/>
<!-- dashed path -->
<path stroke-dasharray="5 3" d="M336.7 240.7 L372.2 223.6 L461.4 284 L469.4 290.2 L209 435 L206.5 560 L220 555"/>
<path stroke-dasharray="5 3" d="M475.4 228.9 L516.5 256.4 L333 357.3"/>
<!-- 32005 sensor -->
<path d="M420.5 210.5 L423.1 207.9 L429.8 207.5 L437.1 207.9 L439.3 209 L450.4 210.9 L452.6 212.7 L453.3 217.1 M420.5 217.1 L423.1 214.9 L428.3 213.8 L443 214.2 L449.7 214.9 L453.3 217.1 M420.5 210.5 L424 211.5 M420.5 217.1 L422 219"/>
<path d="M453.3 217.1 L452.6 220.8 L457.8 223 L460.7 217.9 L462.2 216.4 L466.6 217.1 L471 222.3 L474.7 225.2 L473.3 229.7 L471 231.9 L466.6 229.7 L458.5 225.2 L457.8 223 M459.2 221.5 L466.6 226 L468.1 223 L462 219.5 M466.6 226 L471 231.9 M468.1 223 L473.3 229.7"/>

<!-- d03_clutch.svg -->
<ellipse cx="74.4" cy="388.7" rx="32.4" ry="52.5" transform="rotate(-27.0 74.4 388.7)"/>
<path d="M82.7 348.4 L85.4 350.4 L88.0 352.6 L90.5 355.1 L93.0 357.7 L95.3 360.4 L97.6 363.4 L99.8 366.5 L101.8 369.7 L103.7 373.0 L105.4 376.4 L107.0 379.8 L108.5 383.3 L109.7 386.9 L110.8 390.5 L111.7 394.0 L112.4 397.5 L112.9 401.0 L113.2 404.5 L113.3 407.8 L113.3 411.1 L113.0 414.3 L112.5 417.3 L111.8 420.1 L111.0 422.9"/>
<ellipse cx="73.4" cy="388.7" rx="28.5" ry="47.0" transform="rotate(-27.0 73.4 388.7)" stroke-width="0.7"/>
<ellipse cx="70.0" cy="388.5" rx="21.0" ry="32.5" transform="rotate(-27.0 70.0 388.5)"/>
<ellipse cx="69.5" cy="389.0" rx="18.5" ry="29.0" transform="rotate(-27.0 69.5 389.0)" stroke-width="0.7"/>
<ellipse cx="97.6" cy="375.9" rx="1.3" ry="2" transform="rotate(-20 97.6 375.9)"/>
<ellipse cx="103.0" cy="390.0" rx="1.3" ry="2" transform="rotate(-20 103.0 390.0)"/>
<ellipse cx="105.0" cy="403.9" rx="1.3" ry="2" transform="rotate(-20 105.0 403.9)"/>
<ellipse cx="103.3" cy="415.8" rx="1.3" ry="2" transform="rotate(-20 103.3 415.8)"/>
<ellipse cx="98.1" cy="424.3" rx="1.3" ry="2" transform="rotate(-20 98.1 424.3)"/>
<ellipse cx="90.0" cy="428.4" rx="1.3" ry="2" transform="rotate(-20 90.0 428.4)"/>
<ellipse cx="80.1" cy="427.6" rx="1.3" ry="2" transform="rotate(-20 80.1 427.6)"/>
<ellipse cx="69.5" cy="421.9" rx="1.3" ry="2" transform="rotate(-20 69.5 421.9)"/>
<ellipse cx="59.5" cy="412.2" rx="1.3" ry="2" transform="rotate(-20 59.5 412.2)"/>
<ellipse cx="51.2" cy="399.5" rx="1.3" ry="2" transform="rotate(-20 51.2 399.5)"/>
<ellipse cx="45.8" cy="385.4" rx="1.3" ry="2" transform="rotate(-20 45.8 385.4)"/>
<ellipse cx="43.8" cy="371.5" rx="1.3" ry="2" transform="rotate(-20 43.8 371.5)"/>
<ellipse cx="45.5" cy="359.6" rx="1.3" ry="2" transform="rotate(-20 45.5 359.6)"/>
<ellipse cx="50.7" cy="351.1" rx="1.3" ry="2" transform="rotate(-20 50.7 351.1)"/>
<ellipse cx="58.8" cy="347.0" rx="1.3" ry="2" transform="rotate(-20 58.8 347.0)"/>
<ellipse cx="68.7" cy="347.8" rx="1.3" ry="2" transform="rotate(-20 68.7 347.8)"/>
<ellipse cx="79.3" cy="353.5" rx="1.3" ry="2" transform="rotate(-20 79.3 353.5)"/>
<ellipse cx="89.3" cy="363.2" rx="1.3" ry="2" transform="rotate(-20 89.3 363.2)"/>
<ellipse cx="66.0" cy="391.0" rx="8.0" ry="10.0" transform="rotate(-27.0 66.0 391.0)"/>
<ellipse cx="65.5" cy="391.5" rx="4.5" ry="6.0" transform="rotate(-27.0 65.5 391.5)"/>
<rect x="49.2" y="387.9" width="4" height="4.5" transform="rotate(-20 51.2 389.9)"/>
<rect x="52.9" y="371.6" width="4" height="4.5" transform="rotate(-20 54.9 373.6)"/>
<rect x="67.7" y="371.7" width="4" height="4.5" transform="rotate(-20 69.7 373.7)"/>
<rect x="78.8" y="388.1" width="4" height="4.5" transform="rotate(-20 80.8 390.1)"/>
<rect x="75.1" y="404.4" width="4" height="4.5" transform="rotate(-20 77.1 406.4)"/>
<rect x="60.3" y="404.3" width="4" height="4.5" transform="rotate(-20 62.3 406.3)"/>
<path d="M110.3 298.0 L113.4 296.6 L116.7 295.6 L120.3 295.0 L124.0 294.9 L127.8 295.2 L131.7 296.0 L135.8 297.2 L139.8 298.8 L143.9 300.9 L148.0 303.3 L152.0 306.1 L155.9 309.2 L159.7 312.7 L163.4 316.5 L166.9 320.5 L170.2 324.8 L173.3 329.3 L176.1 334.0 L178.7 338.8 L180.9 343.7 L182.9 348.7 L184.6 353.6 L185.9 358.6 L186.8 363.5 L187.5 368.3 L187.7 373.0 L187.6 377.6 L187.2 381.9 L186.4 386.0 L185.2 389.8 L183.7 393.3 L181.9 396.5 L179.8 399.4 L177.3 401.8 L174.6 403.9 L171.6 405.6 L168.4 406.8 L165.0 407.7 L161.4 408.1 L157.7 408.0 L153.8 407.5 L149.8 406.6 L145.8 405.3 L141.7 403.5 L137.6 401.3 L133.6 398.8 L129.6 395.8 L125.7 392.6 L122.0 389.0 L118.4 385.1 L114.9 381.0 L111.7 376.6 L108.7 372.0 L106.0 367.3 L103.5 362.5 L101.3 357.5 L99.5 352.6 L97.9 347.6 L96.7 342.6 L95.9 337.7"/>
<path d="M97.9 310.6 L99.8 299.8 L109.7 294.8 L127.4 293.9 L139.2 299.8 L147 303.7 M104.8 312.6 L109.7 307.6 L121.5 306.7 L135.3 308.6 L143.1 310.6"/>
<path d="M147 303.7 L158.9 310.6 L168 318 L172.7 324.4 L176 332 M150 322 L156 328 L164 331"/>
<path d="M174.3 363 L184.8 364.9 L184.8 383.3 L180.8 397.7 L173 405.6 L162.5 410.8 L157.5 398.5 L171.7 397.7 M174.3 363 Q176 380 171.7 397.7"/>
<path d="M93 340 L96 350 L101.8 369.6 L111.7 387.4 L118 392 M97.9 310.6 L95.5 325 L93 340 M100 338 L104 356"/>
<path d="M167.9 335.3 L171.1 341.0 L173.8 346.9 L175.9 352.9 L177.5 358.8 L178.4 364.6 L178.7 370.2 L178.3 375.5 L177.3 380.3 L175.8 384.7 L173.6 388.5 L170.9 391.7 L167.6 394.1 L164.0 395.9 L159.9 396.9 L155.5 397.1 L150.9 396.5 L146.1 395.2 L141.3 393.1 L136.4 390.3 L131.7 386.8 L127.1 382.8 L122.7 378.2 L118.7 373.1 L115.1 367.7 L111.9 362.0 L109.2 356.1 L107.1 350.1 L105.5 344.2 L104.6 338.4 L104.3 332.8 L104.7 327.5 L105.7 322.7 L107.2 318.3 L109.4 314.5 L112.1 311.3 L115.4 308.9 L119.0 307.1 L123.1 306.1 L127.5 305.9 L132.1 306.5 L136.9 307.8 L141.7 309.9 L146.6 312.7 L151.3 316.2 L155.9 320.2 L160.3 324.8 L164.3 329.9 L167.9 335.3"/>
<path d="M157.2 390.6 L153.9 390.4 L150.4 389.7 L146.9 388.5 L143.3 386.9 L139.7 384.8 L136.2 382.3 L132.7 379.5 L129.4 376.2 L126.2 372.7 L123.3 368.9 L120.6 364.8 L118.2 360.6 L116.1 356.3 L114.3 351.9 L112.9 347.4 L111.9 343.0 L111.2 338.7 L111.0 334.6 L111.1 330.6 L111.6 326.9 L112.6 323.5 L113.9 320.4 L115.5 317.6 L117.5 315.3 L119.9 313.4 L122.5 312.0 L125.3 311.0 L128.4 310.5 L131.7 310.5 L135.1 311.0"/>
<ellipse cx="145.0" cy="350.0" rx="20.0" ry="30.0" transform="rotate(-31.5 145.0 350.0)"/>
<ellipse cx="147.5" cy="348.5" rx="9.5" ry="13.5" transform="rotate(-31.5 147.5 348.5)"/>
<path d="M157.1 346.7 L165.5 346.5"/>
<path d="M158.2 353.1 L168.1 360.7"/>
<path d="M156.4 358.3 L164.6 372.0"/>
<path d="M152.2 360.9 L155.7 377.4"/>
<path d="M146.8 360.1 L144.0 375.5"/>
<path d="M141.5 356.3 L132.6 366.7"/>
<path d="M137.9 350.3 L124.5 353.5"/>
<path d="M136.8 343.9 L121.9 339.3"/>
<path d="M138.6 338.7 L125.4 328.0"/>
<path d="M142.8 336.1 L134.3 322.6"/>
<path d="M148.2 336.9 L146.0 324.5"/>
<path d="M153.5 340.7 L157.4 333.3"/>
<circle cx="128.8" cy="354.7" r="1.8"/>
<circle cx="127.7" cy="332.5" r="1.8"/>
<circle cx="143.8" cy="327.8" r="1.8"/>
<circle cx="161.2" cy="345.3" r="1.8"/>
<circle cx="162.3" cy="367.5" r="1.8"/>
<circle cx="146.2" cy="372.2" r="1.8"/>
<ellipse cx="107.7" cy="304.7" rx="1.8" ry="2.6" transform="rotate(-25 107.7 304.7)"/>
<ellipse cx="115.6" cy="301.7" rx="1.8" ry="2.6" transform="rotate(-25 115.6 301.7)"/>
<ellipse cx="123.5" cy="300.7" rx="1.8" ry="2.6" transform="rotate(-25 123.5 300.7)"/>
<ellipse cx="130.4" cy="303.7" rx="1.8" ry="2.6" transform="rotate(-25 130.4 303.7)"/>
<ellipse cx="149.0" cy="316.5" rx="1.8" ry="2.6" transform="rotate(-25 149.0 316.5)"/>
<ellipse cx="157.9" cy="322.4" rx="1.8" ry="2.6" transform="rotate(-25 157.9 322.4)"/>
<ellipse cx="178.2" cy="370.2" rx="1.8" ry="2.6" transform="rotate(-25 178.2 370.2)"/>
<ellipse cx="178.9" cy="376.7" rx="1.8" ry="2.6" transform="rotate(-25 178.9 376.7)"/>
<ellipse cx="176.9" cy="385.3" rx="1.8" ry="2.6" transform="rotate(-25 176.9 385.3)"/>
<ellipse cx="162.5" cy="403.0" rx="1.8" ry="2.6" transform="rotate(-25 162.5 403.0)"/>
<ellipse cx="167.7" cy="400.4" rx="1.8" ry="2.6" transform="rotate(-25 167.7 400.4)"/>
<ellipse cx="97.9" cy="348.0" rx="1.8" ry="2.6" transform="rotate(-25 97.9 348.0)"/>
<ellipse cx="99.8" cy="354.0" rx="1.8" ry="2.6" transform="rotate(-25 99.8 354.0)"/>
<ellipse cx="195.0" cy="322.0" rx="15.0" ry="18.5" transform="rotate(-30.0 195.0 322.0)"/>
<ellipse cx="193.5" cy="321.0" rx="12.0" ry="15.5" transform="rotate(-30.0 193.5 321.0)"/>
<ellipse cx="192.5" cy="320.5" rx="8.0" ry="11.0" transform="rotate(-30.0 192.5 320.5)"/>
<ellipse cx="192.0" cy="320.0" rx="5.5" ry="8.0" transform="rotate(-30.0 192.0 320.0)"/>
<path d="M188 312 L193 329 M190 314 L196 328"/>
<ellipse cx="218.7" cy="305.9" rx="7.0" ry="10.5" transform="rotate(-25.0 218.7 305.9)"/>
<ellipse cx="220.2" cy="307.4" rx="4.5" ry="7.0" transform="rotate(-25.0 220.2 307.4)"/>
<path d="M217.2 294.6 L232 286 L235 286.7 L242.3 294.9 L243.8 303.7 L239.4 311.1 L235 317 L229 316.3 L222 316.5 M229 297.8 V315.5 M233.5 294.9 V317 M236 287 L240 296 L241 306 M225 296 L229 297.8"/>
<path d="M256.6 277.9 Q253 277 250.5 279.5 Q247 284 248.2 290 Q250 294.5 254 295.8 Q258 296 261.9 294.2 L264.5 296.2 M256.6 277.9 L257.5 281 M250 279.5 L252 282"/>
<!-- d04_case.svg -->
<!-- bell housing flange outer -->
<path d="M320.6 384.4 Q315 390 315.7 402.5 L319.8 427 L324.7 450 L326.6 457.9 L338 479.2 L352.8 500.5 L369.2 515.2 L388.9 526.7 L410.8 528.2 L423.5 524.6 L434.3 517.4 L437.9 508.4 L438.6 477 L438.3 450 L435.7 420.5 L427.5 400.8 L380 368.9 L360.7 356.6 L352.5 357.4 L346.8 359.8 L337.8 369.7 L328.8 382.8 Z"/>
<!-- flange inner -->
<path d="M326.3 385.2 Q319.8 388 319.8 391.8 L319.8 404.1 L323 420.5 L328 435.2 L331.2 450 L333.1 457.9 L344.6 477.5 L359.3 497.2 L375.7 510.3 L397 521.8 L420 528.4 M331.2 386.9 L335.3 392.6 L344.3 393.4 L365.7 391.8 L385 399.2 L404.6 415.6 L412.8 435.2 L419.3 450 L427.1 468.7 L432.5 477.7 L432.5 510.2"/>
<path d="M347.6 363.9 L380 379.5 L412.8 404.1 L422.6 427 L429.2 450 L434.3 474.1"/>
<!-- holes -->
<g stroke-width="0.9">
<ellipse cx="347.6" cy="365.6" rx="2.5" ry="4" transform="rotate(-15 347.6 365.6)"/>
<ellipse cx="333.7" cy="386.9" rx="2.3" ry="3.5"/>
<ellipse cx="342.7" cy="386.9" rx="2.3" ry="3.5"/>
<ellipse cx="324.7" cy="421.3" rx="2.5" ry="2.8"/>
<ellipse cx="324.7" cy="434.4" rx="2.5" ry="3.2"/>
<ellipse cx="328.2" cy="453" rx="2" ry="2.5"/>
<ellipse cx="355.2" cy="503.8" rx="2.5" ry="2.5"/>
<ellipse cx="388.9" cy="526.7" rx="2.5" ry="2.5"/>
<ellipse cx="413.6" cy="410.7" rx="3" ry="4"/>
<ellipse cx="427.1" cy="447.1" rx="3" ry="4"/>
<ellipse cx="436.1" cy="476.8" rx="2.8" ry="3.5"/>
<ellipse cx="433.4" cy="514.7" rx="2.5" ry="3.5"/>
<path d="M372 381 L375 386 L371 385 Z"/>
</g>
<!-- bell opening -->
<path d="M331.2 414 L364 397.5 L385 392.6 M357.5 405.7 Q354 420 355.8 430 L359 450 L365.9 462.8 L385.6 485.7 L398.7 498.9 L420 503.8 L437 505"/>
<path d="M356.6 418.9 L412 414 M356.6 422.1 L410 420 M364.3 451.3 L405.2 434.9 M364.3 454.6 L408.5 443.1 M374.1 471 L393.8 461.1 L405.2 461.1 L411.8 469.3 M385.6 477.5 L403.6 471 L409.3 477.5 L392.1 487.4 Z"/>
<path d="M412 390 L418 385 M425 388 L430 395 M395 384 L402 386"/>
<!-- case body top -->
<path d="M380 369.7 L450 367.1 L471.6 365.3 L484.3 358.1 L493.3 357.2 L504.1 360.8 L514.9 369.8 L522.1 382.5 L526.7 400.5 L529.4 422.1 L527.6 440.2 L509.5 445.6 L496.9 452.8"/>
<path d="M411.1 374.6 L450 371 L471.6 368 L489.7 364.4 L505.9 375.3 L518.5 391.5 L524 409.5 L525.8 429.4 L518.5 442"/>
<path d="M471.6 368 L484.3 358.1 M489.7 364.4 L498 359"/>
<path d="M430.8 409 L507.7 379.8 M432.5 412.3 L509.5 383.4"/>
<path d="M471.6 396.9 Q482 415 487.9 434.8 M496.9 386.1 Q502 400 504.1 418.5 M503 378 Q512 395 513 412"/>
<path d="M441.5 434.4 L452.3 468.7 L450.5 504.8 L508.2 452.5 L529.9 438 M452.3 495.8 L506 450 M508.2 420 V448.9"/>
<path d="M486 442 L515 420 M460 470 L484 446 M465 490 L488 455"/>
<path d="M445.6 410.7 L452.1 425.4 M455 405 L462 420 M520 386 L524 390 M522 398 L525 403 M521 412 L526 416 M521 425 L526 430"/>
<circle cx="497.4" cy="447.1" r="4.5"/><circle cx="497.4" cy="447.1" r="2.2"/>
<!-- dashed lines to cover -->
<path stroke-dasharray="5 3" d="M265.8 570 L339.7 528.4 M367.5 510.3 L379.4 499.5 M506.4 452.5 L524.5 461.5"/>
<!-- drain plug 32103 -->
<path d="M481 491 Q485 488 489.5 491 L490 503 Q485 506 480.5 503 Z M481 494.5 L490 493.5 M481 498 L490 497 M481 501 L490 500"/>
<!-- 32100A plug -->
<path d="M519.8 461 Q522 458 527 459.5 L533 462 Q534.5 466 532 469.5 L524 469 Q519 466 519.8 461 Z M527 459.5 L525 469 M530 460.5 L528.5 469.5"/>
<!-- 32137 bolt -->
<path d="M553 436 Q545 436 541 441 Q539 447 541 452 Q546 455 553 451 Q555 444 553 436 Z M553 436 L565 433.5 L566 439 L553 444 M556 435.5 L557.5 442.5 M560 434.5 L561 441"/>
<path stroke-dasharray="5 3" d="M534 432.4 L588 405 M535.4 385.9 L548.7 406.6 L569.4 431.7 L565 434.6"/>

<!-- d05_right.svg -->
<!-- adapter plate -->
<path d="M536 349.4 L536.9 337.4 L543.8 325.3 L557.5 319.3 L567.8 320.2 L579.9 327 L588.5 342.5 L591.9 356.3 L595.4 356.3 L597 360 L597 392.4 L600.5 392.4 L600.5 401 L595.4 402 L586.8 406.2 L569.6 411.3 L552.4 407.9 L540.3 394.1 L536 380.4 Z"/>
<path d="M538.5 338 L538.5 378 M588.5 358 L590.2 404.5 M591.9 356.3 L592 402 M595.4 392.4 V401"/>
<path d="M547.2 333.9 Q560 330 571.3 337.4 Q578 345 579.9 354.6 Q581 362 578.2 366.6 Q572 371 564.4 370 Q556 368 550.6 363.2 Q545 355 546.3 347.7 Q546 338 547.2 333.9"/>
<path d="M552.4 340.8 Q558 338 564.4 339.1 Q571 344 574.7 352.8 Q576 358 575.6 363.2 Q571 367 564.4 366.6 Q558 363 554.1 358 Q551 348 552.4 340.8"/>
<ellipse cx="565" cy="353" rx="7" ry="10" transform="rotate(-30 565 353)"/>
<path d="M542 383.8 Q547 376 555.8 373.5 Q566 373 573 377 Q579 382 581.6 389 Q583 396 579.9 402.7 Q575 405 569.6 404.5 Q560 403 552.4 399.3 Q546 395 542.9 390.7"/>
<path d="M546 386 Q552 379 560 378 Q570 379 575 385 Q579 392 577 399 M548 390 Q553 383 561 382 Q570 384 573 392"/>
<path d="M556 373.5 Q565 371 575 368 Q583 372 585 380 L588 378"/>
<g stroke-width="0.9">
<circle cx="543.5" cy="347" r="1.8"/><circle cx="543.5" cy="356" r="1.8"/><circle cx="545" cy="368" r="1.8"/>
<circle cx="551" cy="331" r="1.5"/><circle cx="558" cy="333" r="1.5"/><circle cx="562" cy="334" r="1.5"/>
<circle cx="580" cy="345" r="1.3"/><circle cx="577" cy="361" r="1.5"/><circle cx="585" cy="370" r="1.5"/><circle cx="577" cy="389" r="1.5"/><circle cx="548" cy="398" r="1.5"/>
</g>
<path d="M574 369 L586 368 L586 382 L578 386 L574 380 Z"/>

<!-- gasket 32139 -->
<path d="M599.9 299.8 L605.3 297.1 L617 298 L626.1 305.3 L633.3 316.1 L633.3 330.5 L631.5 355.8 L628.8 377.4 L626.1 379.2 L617 375.6 L602.6 366.6 L600.8 361.2 L599.9 307 Z"/>
<path d="M602.6 303.5 V364.8 M627.9 312.5 L627 377.4"/>
<ellipse cx="614.8" cy="328" rx="9" ry="13.5" transform="rotate(-12 614.8 328)"/><ellipse cx="615" cy="357.5" rx="9" ry="11" transform="rotate(-12 615 357.5)"/>
<path d="M607 320 Q612 316 618 318 M608 350 Q612 347 618 349"/>
<g stroke-width="0.9"><circle cx="603.5" cy="307" r="1.6"/><circle cx="613.5" cy="306.2" r="1.6"/><circle cx="624.3" cy="318.8" r="1.4"/><circle cx="604.4" cy="341.3" r="1.4"/><circle cx="621.6" cy="350.4" r="1.4"/><circle cx="621.6" cy="373.8" r="1.6"/></g>
<path stroke-dasharray="5 3" d="M601.8 392.4 L631 378 M640 372 L700 344.3"/>
<!-- 32139A bolt -->
<ellipse cx="635.5" cy="286.5" rx="5" ry="5"/><ellipse cx="635.5" cy="286.5" rx="2.5" ry="2.5"/>
<path d="M631 284 L625 289 L627 294 L633 291 M626.5 290 L630 293 M628.5 288 L632 291"/>
<!-- 32101E stud -->
<path stroke-dasharray="5 3" d="M630 300 L650 290"/>

<!-- d06_ext.svg -->
<!-- extension housing front flange -->
<path d="M653.9 276 Q653 290 655.3 297 L662.3 316.5 L673.4 330.5 L684.6 341.6 L695.7 345 L705 342 L712.4 333"/>
<path d="M653.9 276 L660.9 262 L668 256 L676.2 252.4 L695.7 249.7 L704.1 255.2 L709.7 272 L712 295 L712.4 333"/>
<path d="M658 278 L659 297 L665 314 L675 327 L686 337 L697 340.5 L706 337 M707.5 275 L709 300 L709.5 330"/>
<path d="M664 270 L670 262 L678 258 L694 256 L700 262 L704 275"/>
<path d="M668 275 L676 268 L682 270 L676 280 L668 282 Z M670 278 L679 271"/>
<ellipse cx="683" cy="296" rx="5" ry="2.5" transform="rotate(-25 683 296)"/>
<path d="M693 302 Q698 299 701 304 Q702 311 698 314 L693 313 M688 318 L694 316 M686 325 L692 321 M680 333 L686 330 M697 326 L705 322 M699 315 L706 312"/>
<path d="M700 287 L706 284 M703 296 L708 293"/>
<!-- body top -->
<path d="M676.2 251 L701.3 244.1 L732 234.3 L757 216.2 M705 240 L732 235.7 L757 222"/>
<path d="M700 252 L720 246 L740 240 M706 262 L730 254"/>
<!-- shifter box -->
<path d="M757 207.9 L782.1 191.1 L801.6 192.5 L807.2 202.3 L804.4 219 L796 227.4 L776.5 232.9 L757 216.2 Z"/>
<path d="M762.6 207.9 L787.7 196.7 L798.8 202.3 L798.8 212 L773.7 224.6 L762.6 216.2 Z M770 210 L790 201"/>
<path d="M807.2 202.3 L806 226 L798.8 235.7 M801 210 H806"/>
<!-- body lower -->
<path d="M712.4 331 L737.5 313.7 L762.6 297 L779.3 280.3 L790.5 263.6 L801.6 252.4 L804.4 238"/>
<!-- ribs -->
<path d="M734.7 249.7 L796 230.2 M737.5 255.2 L796 236 M745.9 263.6 L790.5 244.1 M748.7 274.7 L787.7 258 M752 286 L782 272"/>
<path d="M730 252 L737.5 255 L740 270 L742 285 L743.1 297 M725 258 L729 268 Q733 273 729 277 L732 300 L735 315 M752 250 L758 270 L760 290 M765 244 L770 262 L772 280"/>
<path d="M714 300 L724 296 M716 310 L726 306 M718 322 L730 316"/>
<circle cx="796" cy="235.7" r="3.5"/><circle cx="796" cy="235.7" r="1.5"/>
<circle cx="734.7" cy="269.2" r="3.5"/><circle cx="734.7" cy="269.2" r="1.5"/>
<path d="M684 248 Q690 244 696 248"/>
<!-- 32130A bolt -->
<ellipse cx="793" cy="287" rx="5" ry="5.5"/><ellipse cx="793" cy="287" rx="2.5" ry="3"/>
<path d="M789 290 L773 300 L775 303 L791 293 M777 297 L779 301 M781 295 L783 298 M785 292 L787 296"/>
<!-- dashed box 24210W -->
<path stroke-dasharray="5 3" d="M731 204 L726.6 207 L726.6 250 M707.9 204.8 L726.1 214.8 M672 226 L690 240 M702 232 L706 245"/>
<!-- 24210W -->
<ellipse cx="736.1" cy="200.7" rx="4.5" ry="4.5"/><ellipse cx="736.1" cy="200.7" rx="2" ry="2.2"/>
<path d="M739.4 198.2 L752.7 197 L752.7 204.8 L739.4 206"/>
<!-- vertical bolt -->
<path d="M700.5 212 Q702.9 209.5 705.3 212 L705 226 Q702.9 229 700.8 226 Z M701 215 H705 M701.5 219 H705"/>
<path d="M705 212 L760 233"/>
<!-- 24210WA -->
<ellipse cx="656.4" cy="219.7" rx="3.8" ry="6" transform="rotate(-10 656.4 219.7)"/>
<ellipse cx="657" cy="219.7" rx="2" ry="3.5"/>
<ellipse cx="667" cy="218.6" rx="5.5" ry="6"/>
<path d="M663 216 H671 M663 221 H671 M666 213 V224"/>
<path stroke-dasharray="5 3" d="M661 226 L680 244"/>
<!-- 32006M switch -->
<path d="M611 168 L615 167 L631 179 L630 183 L627 183 L611 172 Z M602 177 Q604 175 607 177 L622 189 L621 192 L617 192 L602 181 Z"/>
<path d="M630.7 182 L644.8 184.9 Q655 184 663.1 181.6 L678 185.7 L688.8 192.4 M621.6 191 L643.1 192.4 Q652 190 661.4 185.7 L674.7 186.5 L688 194.8"/>
<path d="M688.8 192.4 L698.8 190.7 L703.7 198.2 L694.6 204.8 L688 200.7 Z M693 191.5 L688.5 200.5"/>
<ellipse cx="703" cy="201.5" rx="3" ry="3.5"/>

<!-- 32135 housing -->
<path stroke-dasharray="3 1" d="M850.3 174.8 Q855 170 861.1 169.9 Q870 171 873.9 176.8 L879.8 189.6 Q880 195 877.8 198.5 L869 205.4 Q864 209 858.1 210.3"/>
<ellipse cx="850.5" cy="192" rx="10.5" ry="16" transform="rotate(-18 850.5 192)"/>
<ellipse cx="851.5" cy="195.5" rx="7.5" ry="9" transform="rotate(-25 851.5 195.5)"/>
<ellipse cx="852" cy="196" rx="4.5" ry="6.8" transform="rotate(-25 852 196)"/>
<path d="M854 176.5 Q858 178 860.1 180.7 L866 190.6 L868 197.5 L868 205.4"/>
<!-- 00933 plug -->
<ellipse cx="819.3" cy="192" rx="6.5" ry="6" transform="rotate(20 819.3 192)"/>
<path d="M817 186.5 L823 197"/>
<!-- 32136 seal -->
<ellipse cx="830" cy="210" rx="5.5" ry="6.5" transform="rotate(-35 830 210)"/>
<ellipse cx="830.5" cy="210.5" rx="3" ry="4" transform="rotate(-35 830.5 210.5)"/>

<!-- d07_bottomleft.svg -->
<!-- 32112 gasket -->
<path d="M292.2 481.1 L301.4 475.3 L312.9 477.6 L322 483.4 L331.2 497.1 L335.8 513.2 L333.5 527 L324.3 538.4 L317.5 540.7 L306 533.9 L296.8 520.1 L291.1 501.7 Z"/>
<path d="M301.4 483.4 L312.9 484.5 L322 494.8 L325.5 510.9 L322 529.3 L312.9 531.6 L306 517.8 L301.4 499.4 Z"/>
<g stroke-width="0.9"><circle cx="294.5" cy="490.2" r="1.5"/><circle cx="296.8" cy="501.7" r="1.5"/><circle cx="298" cy="513.2" r="1.5"/><circle cx="319.8" cy="483.4" r="1.3"/><circle cx="330.1" cy="513.2" r="1.3"/><circle cx="323.2" cy="537.3" r="1.5"/></g>
<!-- 32113 seal -->
<ellipse cx="276.1" cy="520.1" rx="10" ry="13" transform="rotate(-30 276.1 520.1)"/>
<ellipse cx="275.5" cy="519.5" rx="7" ry="9.5" transform="rotate(-30 275.5 519.5)"/>
<ellipse cx="275" cy="519" rx="4" ry="6" transform="rotate(-30 275 519)"/>
<!-- 32110 cover -->
<path d="M221.1 522.4 L230.2 517.8 L253.2 520.1 L260.1 533.9 L269.3 554.5 L262.4 575.2 L255.5 582 L239.4 575.2 L223.4 561.4 L218.8 540.7 Z"/>
<path d="M223 527 Q232 522 250 525 L256 536 L264 555 L258 572 M226 530 L228 558 L240 570 L252 576"/>
<ellipse cx="239.4" cy="545.3" rx="9" ry="11" transform="rotate(-25 239.4 545.3)"/>
<ellipse cx="241" cy="544" rx="5" ry="7" transform="rotate(-25 241 544)"/>
<ellipse cx="224.5" cy="552.2" rx="4" ry="5"/>
<ellipse cx="255.5" cy="559.1" rx="4.5" ry="6.5" transform="rotate(-20 255.5 559.1)"/>
<path d="M232 532 L248 532 M236 560 L246 575 M244 560 L252 572 M222 526 Q225 523 228 526 M233 523 Q236 520 239 523 M244 523 Q247 520 250 524"/>
<!-- washer 08915 -->
<ellipse cx="213" cy="571.7" rx="4.5" ry="6.5" transform="rotate(-20 213 571.7)"/>
<ellipse cx="213" cy="571.7" rx="2" ry="3.5" transform="rotate(-20 213 571.7)"/>
<!-- bolt 30537 -->
<path d="M182 588 L186 594 L191 591 L203 582 L201 577 L196 578 Z M188 586 L192 591 M192 583 L196 588 M196 580 L200 585 M182 588 Q181 592 186 594"/>
<!-- bolt 32110A -->
<path d="M218 596 Q220 601 225 601 L241 591 L239 586 L224 594 M227 594 L230 598 M231 591 L234 596 M235 589 L238 594 M218 596 Q222 592 227 594"/>
<!-- dashes -->
<path stroke-dasharray="5 3" d="M264.7 572.9 L342.7 524.7 M201 582 L207 578 M240 590 L255 583"/>

<!-- d08_front.svg -->
<path stroke-width="2.4" stroke-linejoin="miter" stroke-linecap="butt" d="M790.9 562.8 L781.3 567.6 L777.6 562.8 L766.4 583 L788.8 583 L785.6 577.2 L795.1 570.8"/>
<g transform="translate(800 569) rotate(-28) skewX(-10) scale(1.0 1.02) translate(0 -10)" stroke-width="1.1"><path d="M7 0 H0 V10 M0 5 H5" transform="translate(0.00 0)"/><path d="M0 10 V0 H4.5 Q7 0 7 2.5 Q7 5 4.5 5 H0 M3.5 5 L7 10" transform="translate(10.50 0)"/><path d="M0 2.5 Q0 0 3.5 0 Q7 0 7 2.5 V7.5 Q7 10 3.5 10 Q0 10 0 7.5 Z" transform="translate(21.00 0)"/><path d="M0 10 V0 L7 10 V0" transform="translate(31.50 0)"/><path d="M0 0 H7 M3.5 0 V10" transform="translate(42.00 0)"/></g>

</g>
</g>
</svg>
</body></html>
